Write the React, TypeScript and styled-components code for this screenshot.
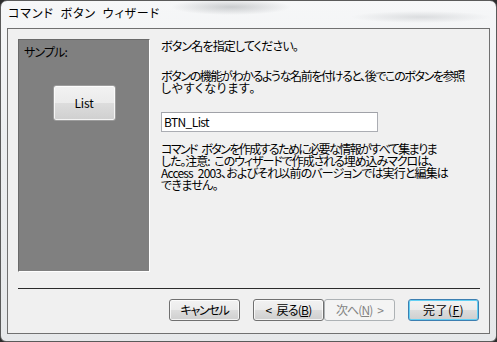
import React, { useLayoutEffect, useRef, useState } from "react";
import styled, { createGlobalStyle } from "styled-components";

const GlobalStyle = createGlobalStyle`
  html, body { margin: 0; padding: 0; background: #2d2d2d; }
  body {
    width: 497px; height: 342px; overflow: hidden;
    font-family: "Noto Sans CJK JP", "Liberation Sans", sans-serif;
    font-size: 12px; color: #000;
  }
  * { box-sizing: border-box; }
`;

const Window = styled.div`
  width: 497px;
  height: 342px;
  display: flex;
  flex-direction: column;
  border: 1px solid #5a5a5a;
  border-radius: 7px 7px 6px 6px;
  background:
    radial-gradient(ellipse 60px 8px at 230px 6px, rgba(120,125,130,0.35), transparent),
    radial-gradient(ellipse 70px 6px at 420px 16px, rgba(140,145,150,0.25), transparent),
    linear-gradient(180deg, #f6f7f8 0%, #eceef0 40%, #e6e8ea 100%);
  padding: 0 6px 7px 6px;
`;

const TitleBar = styled.div`
  height: 27px;
  display: flex;
  align-items: center;
  padding: 0 0 3px 1px;
  font-size: 12px;
  color: #000;
`;

const Client = styled.div`
  flex: 1;
  display: flex;
  flex-direction: column;
  background: #f0f0f0;
  border: 1px solid #707070;
  padding: 10px 9px 0 10px;
`;

const MainRow = styled.div`
  display: flex;
  height: 233px;
`;

const SamplePanel = styled.div`
  flex: 0 0 132px;
  width: 132px;
  height: 233px;
  background: #808080;
  border-style: solid;
  border-width: 1px;
  border-color: #6a6a6a #ffffff #ffffff #6a6a6a;
  display: flex;
  flex-direction: column;
  padding: 6px 0 0 5px;
`;

const SampleLabel = styled.div`
  line-height: 12px;
`;

const SampleButtonWrap = styled.div`
  display: flex;
  justify-content: center;
  padding-right: 5px;
  margin-top: 27px;
`;

const Button = styled.div<{ $w?: number; $h?: number; $variant?: "normal" | "default" | "disabled" }>`
  flex: 0 0 auto;
  width: ${(p) => p.$w ?? 71}px;
  height: ${(p) => p.$h ?? 22}px;
  display: flex;
  align-items: center;
  justify-content: center;
  border-radius: 3px;
  font-size: 12px;
  line-height: 12px;
  border: 1px solid
    ${(p) => (p.$variant === "default" ? "#3c7fb1" : p.$variant === "disabled" ? "#adb2b5" : "#707070")};
  color: ${(p) => (p.$variant === "disabled" ? "#838383" : "#000")};
  background: ${(p) =>
    p.$variant === "disabled"
      ? "#f4f4f4"
      : "linear-gradient(180deg, #f2f2f2 0%, #ebebeb 50%, #dddddd 50%, #cfcfcf 100%)"};
  box-shadow: ${(p) =>
    p.$variant === "default"
      ? "inset 0 0 0 1px #62d0f4"
      : p.$variant === "disabled"
      ? "none"
      : "inset 0 0 0 1px rgba(255,255,255,0.75)"};
  u { text-decoration: underline; text-underline-offset: 1px; }
`;

const SampleButton = styled(Button)`
  border-color: #9c9c9c;
`;

const RightPane = styled.div`
  flex: 1;
  min-width: 0;
  margin-left: 11px;
  display: flex;
  flex-direction: column;
  padding-top: 1px;
`;

const Para = styled.div<{ $top: number }>`
  margin-top: ${(p) => p.$top}px;
  line-height: 12px;
  display: flex;
  flex-direction: column;
  align-items: flex-start;
`;

const FitText = styled.span`
  display: inline-block;
  height: 12px;
  line-height: 12px;
  white-space: pre;
  font-feature-settings: "palt";
`;

const NameInput = styled.div`
  margin-top: 18px;
  width: 217px;
  height: 20px;
  background: #fff;
  border: 1px solid #abadb3;
  border-top-color: #a0a2a8;
  display: flex;
  align-items: center;
  padding-left: 2px;
  font-size: 12px;
`;

const Separator = styled.div`
  margin-top: 16px;
  height: 1px;
  background: #2a2a2a;
`;

const ButtonRow = styled.div`
  margin-top: 10px;
  display: flex;
  justify-content: flex-end;
  padding-right: 1px;
`;

const Spacer = styled.div<{ $w: number }>`
  flex: 0 0 auto;
  width: ${(p) => p.$w}px;
`;

/* Text line whose letter-spacing is computed at run time so its width matches the reference. */
function Fit({ w, children }: { w: number; children: React.ReactNode }) {
  const ref = useRef<HTMLSpanElement>(null);
  const [ls, setLs] = useState(0);
  useLayoutEffect(() => {
    const measure = () => {
      const el = ref.current;
      if (!el) return;
      const prev = el.style.letterSpacing;
      el.style.letterSpacing = "0px";
      const natural = el.getBoundingClientRect().width;
      el.style.letterSpacing = prev;
      const n = Array.from(el.textContent || "").length;
      if (n > 0) setLs((w - natural) / n);
    };
    measure();
    if ((document as any).fonts?.ready) (document as any).fonts.ready.then(measure);
  }, [w]);
  return (
    <FitText ref={ref} style={{ letterSpacing: `${ls}px` }}>
      {children}
    </FitText>
  );
}

const SP = "\u2002";

export default function App() {
  return (
    <>
      <GlobalStyle />
      <Window>
        <TitleBar>
          <Fit w={152}>{`コマンド${SP}ボタン${SP}ウィザード`}</Fit>
        </TitleBar>
        <Client>
          <MainRow>
            <SamplePanel>
              <SampleLabel>
                <Fit w={43}>サンプル:</Fit>
              </SampleLabel>
              <SampleButtonWrap>
                <SampleButton $w={63} $h={36}>
                  <Fit w={19}>List</Fit>
                </SampleButton>
              </SampleButtonWrap>
            </SamplePanel>
            <RightPane>
              <Para $top={0}>
                <Fit w={137}>ボタン名を指定してください。</Fit>
              </Para>
              <Para $top={18}>
                <Fit w={303}>ボタンの機能がわかるような名前を付けると、後でこのボタンを参照</Fit>
                <Fit w={95}>しやすくなります。</Fit>
              </Para>
              <NameInput>
                <Fit w={45}>BTN_List</Fit>
              </NameInput>
              <Para $top={11}>
                <Fit w={275}>{`コマンド${SP}ボタンを作成するために必要な情報がすべて集まりま`}</Fit>
                <Fit w={272}>{`した。注意:${SP}このウィザードで作成される埋め込みマクロは、`}</Fit>
                <Fit w={287}>{`Access${SP}2003、およびそれ以前のバージョンでは実行と編集は`}</Fit>
                <Fit w={57}>できません。</Fit>
              </Para>
            </RightPane>
          </MainRow>
          <Separator />
          <ButtonRow>
            <Button>
              <Fit w={48}>キャンセル</Fit>
            </Button>
            <Spacer $w={13} />
            <Button>
              <Fit w={46}>
                {`<${SP}戻る(`}<u>B</u>)
              </Fit>
            </Button>
            <Button $variant="disabled">
              <Fit w={47}>
                次へ(<u>N</u>){`${SP}>`}
              </Fit>
            </Button>
            <Spacer $w={13} />
            <Button $variant="default">
              <Fit w={41}>
                完了(<u>F</u>)
              </Fit>
            </Button>
          </ButtonRow>
        </Client>
      </Window>
    </>
  );
}
